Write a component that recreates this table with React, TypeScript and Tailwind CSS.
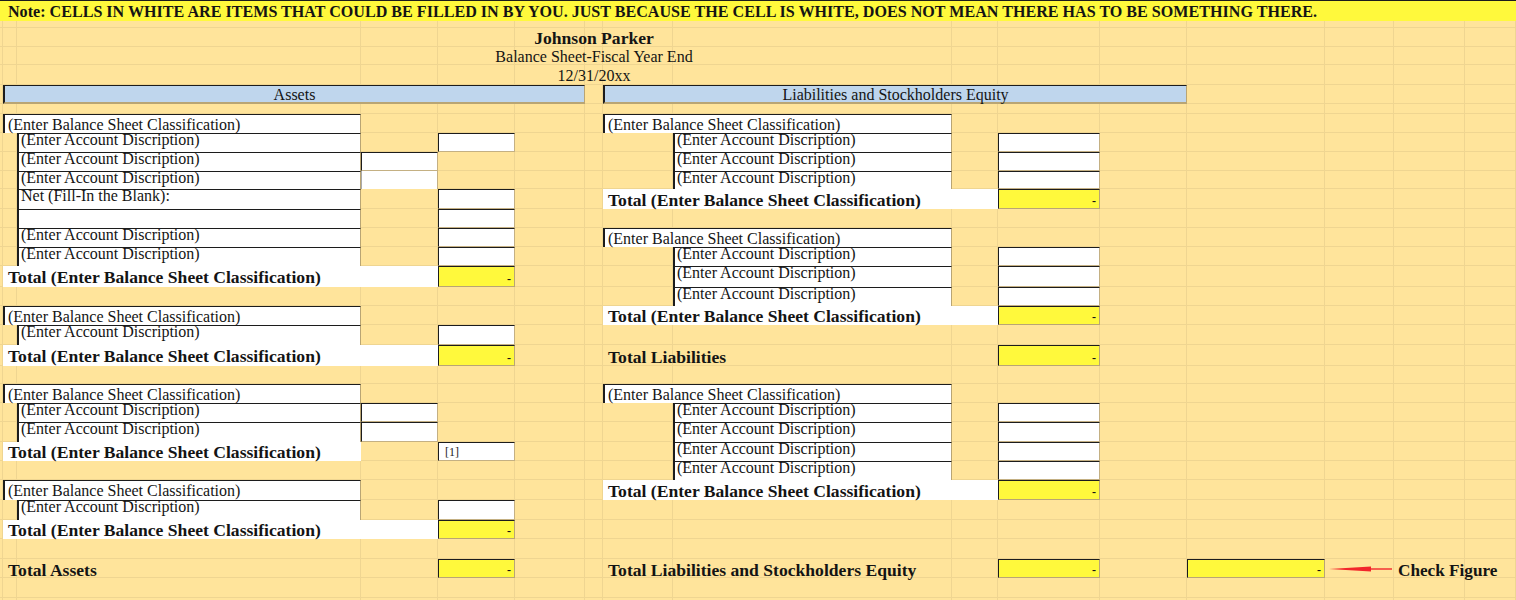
import React from "react";

const CLASS_TEXT = "(Enter Balance Sheet Classification)";
const ACCT_TEXT = "(Enter Account Discription)";
const TOTAL_TEXT = "Total (Enter Balance Sheet Classification)";

interface PosProps {
  pos: string;
  text?: string;
}

const ClassBox = ({ pos, text = CLASS_TEXT }: PosProps) => (
  <div
    className={`${pos} flex items-center whitespace-nowrap border-t border-l-2 border-r border-t-[#1c1c1c] border-l-[#1c1c1c] border-r-[#b9a574] bg-white pl-[3px] pt-[1px] text-[16px] leading-none`}
  >
    {text}
  </div>
);

const AcctBox = ({ pos, text = ACCT_TEXT }: PosProps) => (
  <div
    className={`${pos} whitespace-nowrap border-t border-l-2 border-r border-t-[#1c1c1c] border-l-[#1c1c1c] border-r-[#b9a574] bg-white pl-[2px] text-[16px] leading-[12px]`}
  >
    {text}
  </div>
);

const ValueBox = ({ pos, text }: PosProps) => (
  <div
    className={`${pos} flex items-center border-t border-l border-r border-b border-t-[#1c1c1c] border-l-[#1c1c1c] border-r-[#c4b083] border-b-[#c4b083] bg-white pl-[6px] text-[12px] leading-none text-[#222]`}
  >
    {text}
  </div>
);

const SoftBox = ({ pos }: PosProps) => (
  <div className={`${pos} border-l border-r border-l-[#aaa] border-r-[#c4b083] bg-white`} />
);

const YellowBox = ({ pos }: PosProps) => (
  <div
    className={`${pos} flex items-end justify-end border-t border-l border-r border-b border-t-[#1c1c1c] border-l-[#1c1c1c] border-r-[#b9a574] border-b-[#b9a574] bg-[#fff93c] pr-[3px] pb-[1px] text-[12px] font-bold leading-none`}
  >
    -
  </div>
);

const TotalRow = ({ pos, text = TOTAL_TEXT }: PosProps) => (
  <div className={`${pos} flex items-center whitespace-nowrap bg-white pl-[5px] pt-[3px] text-[17.6px] font-bold leading-none`}>
    {text}
  </div>
);

const Label = ({ pos, text }: PosProps) => (
  <div className={`${pos} flex items-center whitespace-nowrap pl-[5px] pt-[4px] text-[17.6px] font-bold leading-none`}>
    {text}
  </div>
);

const CheckArrow = () => (
  <svg width="64" height="8" viewBox="0 0 64 8" className="mt-[6px] ml-[4px]">
    <polygon points="0,4 42,1.6 42,6.4" fill="#f2262b" />
    <line x1="40" y1="4" x2="63" y2="4" stroke="#f2262b" strokeWidth="1.4" />
  </svg>
);

export default function App() {
  return (
    <div className="h-[600px] w-[1516px] overflow-hidden bg-[#ffe49b] font-['Liberation_Serif',serif] text-[#141414]">
      <div className="grid">
        {/* sheet gridlines */}
        <div className="col-start-1 row-start-1 grid grid-cols-[3px_14px_344px_77px_77px_70px_18px_70px_279px_46px_102px_87px_138px_69px_71px_51px] grid-rows-[21px_7px_19px_18px_20px_19px_10px_19px_19px_19px_18px_20px_19px_19px_19px_21px_19px_19px_20px_21px_18px_19px_19px_20px_19px_19px_20px_20px_19px_20px_19px_20px_20px]">
          {Array.from({ length: 16 * 33 }).map((_, i) => (
            <div key={i} className="border-r border-b border-[#efd591]" />
          ))}
        </div>

        {/* cells */}
        <div className="col-start-1 row-start-1 grid grid-cols-[3px_14px_344px_77px_77px_70px_18px_70px_279px_46px_102px_87px_138px_69px_71px_51px] grid-rows-[21px_7px_19px_18px_20px_19px_10px_19px_19px_19px_18px_20px_19px_19px_19px_21px_19px_19px_20px_21px_18px_19px_19px_20px_19px_19px_20px_20px_19px_20px_19px_20px_20px]">
          <div className="col-start-1 col-span-16 row-start-1 flex items-center whitespace-nowrap border-t border-[#1c1c1c] bg-[#fff93c] pl-[8px] pt-[3px] text-[16.1px] font-bold leading-none">
            Note: CELLS IN WHITE ARE ITEMS THAT COULD BE FILLED IN BY YOU. JUST BECAUSE THE CELL IS WHITE, DOES NOT MEAN THERE HAS TO BE SOMETHING THERE.
          </div>

          <div className="col-start-6 col-span-3 row-start-3 flex items-center justify-center whitespace-nowrap pt-[2px] text-[17.6px] font-bold leading-none">
            Johnson Parker
          </div>
          <div className="col-start-6 col-span-3 row-start-4 flex items-center justify-center whitespace-nowrap pt-[1px] text-[16px] leading-none">
            Balance Sheet-Fiscal Year End
          </div>
          <div className="col-start-6 col-span-3 row-start-5 flex items-center justify-center whitespace-nowrap pt-[2px] text-[16px] leading-none">
            12/31/20xx
          </div>

          <div className="col-start-2 col-span-5 row-start-6 flex items-center justify-center border-t border-l-2 border-b-2 border-r border-t-[#1c1c1c] border-l-[#1c1c1c] border-b-[#b9a574] border-r-[#b9a574] bg-[#bfd6ed] pt-[1px] text-[16px] leading-none">
            Assets
          </div>
          <div className="col-start-8 col-span-5 row-start-6 flex items-center justify-center border-t border-l-2 border-b-2 border-r border-t-[#1c1c1c] border-l-[#1c1c1c] border-b-[#b9a574] border-r-[#b9a574] bg-[#bfd6ed] pt-[1px] text-[16px] leading-none">
            Liabilities and Stockholders Equity
          </div>

          {/* Assets: block 1 */}
          <ClassBox pos="col-start-2 col-span-2 row-start-8" />
          <AcctBox pos="col-start-3 row-start-9" />
          <ValueBox pos="col-start-5 row-start-9" />
          <AcctBox pos="col-start-3 row-start-10" />
          <ValueBox pos="col-start-4 row-start-10" />
          <AcctBox pos="col-start-3 row-start-11" />
          <SoftBox pos="col-start-4 row-start-11" />
          <AcctBox pos="col-start-3 row-start-12" text="Net (Fill-In the Blank):" />
          <ValueBox pos="col-start-5 row-start-12" />
          <AcctBox pos="col-start-3 row-start-13" text="" />
          <ValueBox pos="col-start-5 row-start-13" />
          <AcctBox pos="col-start-3 row-start-14" />
          <ValueBox pos="col-start-5 row-start-14" />
          <AcctBox pos="col-start-3 row-start-15" />
          <ValueBox pos="col-start-5 row-start-15" />
          <TotalRow pos="col-start-2 col-span-3 row-start-16" />
          <YellowBox pos="col-start-5 row-start-16" />

          {/* Assets: block 2 */}
          <ClassBox pos="col-start-2 col-span-2 row-start-18" />
          <AcctBox pos="col-start-3 row-start-19" />
          <ValueBox pos="col-start-5 row-start-19" />
          <TotalRow pos="col-start-2 col-span-3 row-start-20" />
          <YellowBox pos="col-start-5 row-start-20" />

          {/* Assets: block 3 */}
          <ClassBox pos="col-start-2 col-span-2 row-start-22" />
          <AcctBox pos="col-start-3 row-start-23" />
          <ValueBox pos="col-start-4 row-start-23" />
          <AcctBox pos="col-start-3 row-start-24" />
          <ValueBox pos="col-start-4 row-start-24" />
          <TotalRow pos="col-start-2 col-span-2 row-start-25" />
          <ValueBox pos="col-start-5 row-start-25" text="[1]" />

          {/* Assets: block 4 */}
          <ClassBox pos="col-start-2 col-span-2 row-start-27" />
          <AcctBox pos="col-start-3 row-start-28" />
          <ValueBox pos="col-start-5 row-start-28" />
          <TotalRow pos="col-start-2 col-span-3 row-start-29" />
          <YellowBox pos="col-start-5 row-start-29" />

          <Label pos="col-start-2 col-span-2 row-start-31" text="Total Assets" />
          <YellowBox pos="col-start-5 row-start-31" />

          {/* Liabilities: block 1 */}
          <ClassBox pos="col-start-8 col-span-2 row-start-8" />
          <AcctBox pos="col-start-9 row-start-9" />
          <ValueBox pos="col-start-11 row-start-9" />
          <AcctBox pos="col-start-9 row-start-10" />
          <ValueBox pos="col-start-11 row-start-10" />
          <AcctBox pos="col-start-9 row-start-11" />
          <ValueBox pos="col-start-11 row-start-11" />
          <TotalRow pos="col-start-8 col-span-3 row-start-12" />
          <YellowBox pos="col-start-11 row-start-12" />

          {/* Liabilities: block 2 */}
          <ClassBox pos="col-start-8 col-span-2 row-start-14" />
          <AcctBox pos="col-start-9 row-start-15" />
          <ValueBox pos="col-start-11 row-start-15" />
          <AcctBox pos="col-start-9 row-start-16" />
          <ValueBox pos="col-start-11 row-start-16" />
          <AcctBox pos="col-start-9 row-start-17" />
          <ValueBox pos="col-start-11 row-start-17" />
          <TotalRow pos="col-start-8 col-span-3 row-start-18" />
          <YellowBox pos="col-start-11 row-start-18" />

          <Label pos="col-start-8 col-span-2 row-start-20" text="Total Liabilities" />
          <YellowBox pos="col-start-11 row-start-20" />

          {/* Stockholders equity */}
          <ClassBox pos="col-start-8 col-span-2 row-start-22" />
          <AcctBox pos="col-start-9 row-start-23" />
          <ValueBox pos="col-start-11 row-start-23" />
          <AcctBox pos="col-start-9 row-start-24" />
          <ValueBox pos="col-start-11 row-start-24" />
          <AcctBox pos="col-start-9 row-start-25" />
          <ValueBox pos="col-start-11 row-start-25" />
          <AcctBox pos="col-start-9 row-start-26" />
          <ValueBox pos="col-start-11 row-start-26" />
          <TotalRow pos="col-start-8 col-span-3 row-start-27" />
          <YellowBox pos="col-start-11 row-start-27" />

          <Label pos="col-start-8 col-span-3 row-start-31" text="Total Liabilities and Stockholders Equity" />
          <YellowBox pos="col-start-11 row-start-31" />
          <YellowBox pos="col-start-13 row-start-31" />
          <div className="col-start-14 row-start-31">
            <CheckArrow />
          </div>
          <div className="col-start-15 col-span-2 row-start-31 flex items-center whitespace-nowrap pl-[4px] pt-[4px] text-[17.2px] font-bold leading-none">
            Check Figure
          </div>
        </div>
      </div>
    </div>
  );
}
